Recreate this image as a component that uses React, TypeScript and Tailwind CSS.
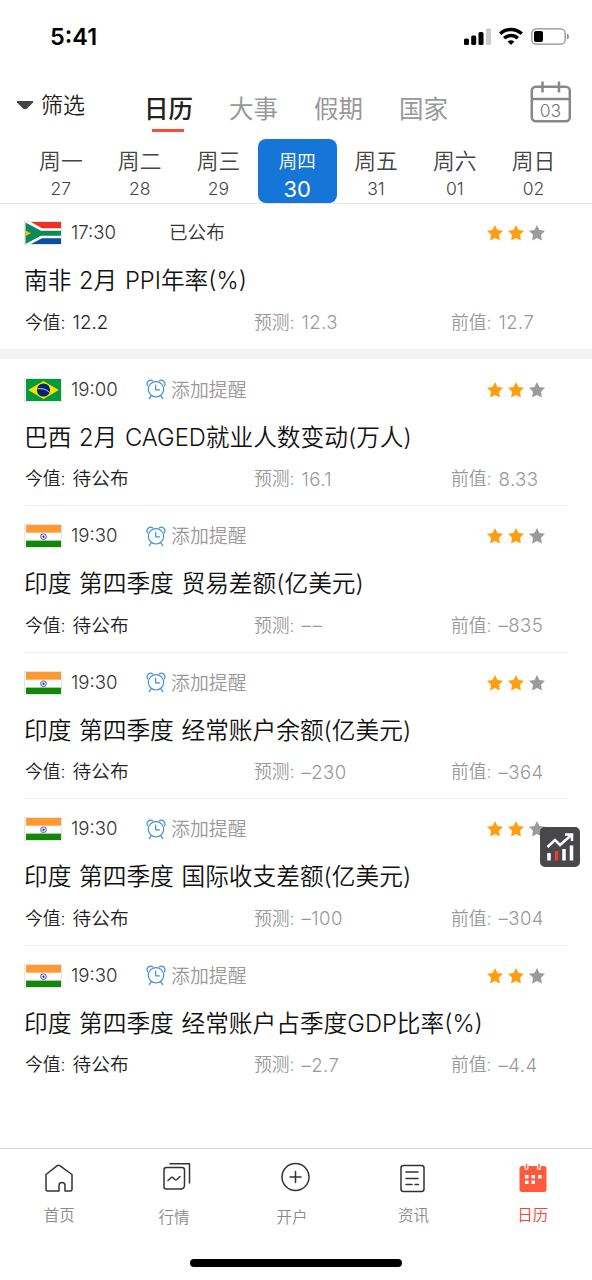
import React, { useState } from 'react'
import clsx from 'clsx'

type Country = 'za' | 'br' | 'in'

interface EconEvent {
  id: number;
  country: Country;
  time: string;
  title: string;
  published: boolean;
  actual: string;
  forecast: string;
  previous: string;
}

const days = [
  { label: '周一', date: '27' },
  { label: '周二', date: '28' },
  { label: '周三', date: '29' },
  { label: '周四', date: '30' },
  { label: '周五', date: '31' },
  { label: '周六', date: '01' },
  { label: '周日', date: '02' },
]

const events: EconEvent[] = [
  { id: 1, country: 'za', time: '17:30', title: '南非 2月 PPI年率(%)', published: true, actual: '12.2', forecast: '12.3', previous: '12.7' },
  { id: 2, country: 'br', time: '19:00', title: '巴西 2月 CAGED就业人数变动(万人)', published: false, actual: '待公布', forecast: '16.1', previous: '8.33' },
  { id: 3, country: 'in', time: '19:30', title: '印度 第四季度 贸易差额(亿美元)', published: false, actual: '待公布', forecast: '––', previous: '–835' },
  { id: 4, country: 'in', time: '19:30', title: '印度 第四季度 经常账户余额(亿美元)', published: false, actual: '待公布', forecast: '–230', previous: '–364' },
  { id: 5, country: 'in', time: '19:30', title: '印度 第四季度 国际收支差额(亿美元)', published: false, actual: '待公布', forecast: '–100', previous: '–304' },
  { id: 6, country: 'in', time: '19:30', title: '印度 第四季度 经常账户占季度GDP比率(%)', published: false, actual: '待公布', forecast: '–2.7', previous: '–4.4' },
]

const StatusBar = () => (
  <div className="flex h-[73px] items-center justify-between pl-[50px] pr-[22px]">
    <span className="text-[23.5px] font-semibold text-black">5:41</span>
    <svg width="106" height="20" viewBox="0 0 106 20">
      <rect x="0" y="11.5" width="5" height="6.5" rx="1.5" />
      <rect x="7.2" y="8.5" width="5" height="9.5" rx="1.5" />
      <rect x="14.5" y="5" width="5" height="13" rx="1.5" />
      <rect x="22" y="1.3" width="5" height="16.7" rx="1.5" fill="#ccc" />
      <g fill="none" stroke="#000" strokeWidth="3.4">
        <path d="M36.2 6.8a15.6 15.6 0 0 1 21.6 0" />
        <path d="M40.2 11.2a9.8 9.8 0 0 1 13.6 0" />
      </g>
      <path d="M47 18l-3.4-3.400a5.300 5.300 0 0 1 6.800 0z" />
      <rect x="67.8" y="1.8" width="33.4" height="15.4" rx="4.5" fill="none" stroke="#8e8e8e" strokeWidth="1.3" />
      <rect x="70" y="4" width="9" height="11" rx="2" />
      <path d="M103 6.5c2.6.8 2.6 5.2 0 6z" fill="#8e8e8e" />
    </svg>
  </div>
)

const Flag = ({ country }: { country: Country }) => (
  <svg width="38" height="24" viewBox="0 0 38 24">
    <rect width="38" height="24" fill="#e6e6e6" />
    <rect x="1" y="1" width="36" height="22" fill="#fff" />
    {country === 'za' && (
      <g>
        <path d="M7 1h30v6.300H18z" fill="#ee3124" />
        <path d="M7 23h30v-5.800H18z" fill="#0b4ea2" />
        <path d="M1.500 1.500L17 9.700h20v5H17L1.500 23z" fill="#0b8a5c" />
        <path d="M1.500 9.500l5.500 2.800-5.500 2.700z" fill="#fdb913" />
      </g>
    )}
    {country === 'br' && (
      <g>
        <rect x="2" y="1" width="35" height="22" fill="#009b3a" />
        <path d="M19.500 3l15.300 9-15.300 9-15.300-9z" fill="#fedf00" />
        <circle cx="19.500" cy="12" r="6.600" fill="#002776" />
        <path d="M13.400 11c4-1 9 .2 12 3.400" fill="none" stroke="#fff" strokeWidth="0.8" />
      </g>
    )}
    {country === 'in' && (
      <g>
        <rect x="2" y="1" width="35" height="7.700" fill="#ff9933" />
        <rect x="2" y="16.600" width="35" height="6.400" fill="#138808" />
        <circle cx="19.500" cy="12.700" r="2.900" fill="#d9d9f0" stroke="#5a5ab4" strokeWidth="0.9" />
        <circle cx="19.500" cy="12.700" r="1" fill="#2b2b96" />
      </g>
    )}
  </svg>
)

const AlarmIcon = () => (
  <svg className="-mt-[2px]" width="20" height="21" viewBox="0 0 20 21" fill="none" stroke="#3f8fdc" strokeWidth="1.2" strokeLinecap="round" strokeLinejoin="round">
    <circle cx="10" cy="10.3" r="7.7" />
    <path d="M9.7 6.2v4.6h3.8" />
    <path d="M1.5 6.8C-.2 3.6 3.4-.4 6.6 1.7M18.5 6.8c1.7-3.2-1.9-7.2-5.1-5.1" />
    <path d="M5 17.2l-1.8 2.4M15 17.2l1.8 2.4" />
  </svg>
)

const Stars = () => (
  <div className="flex gap-[5px]">
    {['#ff9f0f', '#ff9f0f', '#9b9b9b'].map((color, i) => (
      <svg key={i} width="16" height="16" viewBox="0 0 16 16" fill={color}>
        <path d="M8 0l2.500 5 5.500.8-4 3.900.9 5.800L8 13l-4.900 2.500.9-5.800L0 5.800 5.500 5z" />
      </svg>
    ))}
  </div>
)

const EventItem = ({ event, first, divider }: { event: EconEvent; first: boolean; divider: boolean }) => (
  <div className="px-6">
    <div className={clsx('h-[146.5px]', first ? 'pt-[13px]' : 'pt-[14px]', divider && 'border-b border-[#f1f1f1]')}>
      <div className="flex h-8 items-center">
        <Flag country={event.country} />
        <span className="ml-[9px] w-[75px] text-[18.6px] text-[#333]">{event.time}</span>
        {event.published ? (
          <span className="ml-[23px] text-[18.6px] text-[#333]">已公布</span>
        ) : (
          <button className="flex items-center gap-[5px] pt-[2px] text-[18.9px] leading-6 text-[#999]">
            <AlarmIcon />
            添加提醒
          </button>
        )}
        <div className="ml-auto mr-[23px]">
          <Stars />
        </div>
      </div>
      <h3 className="mt-[12px] flex h-10 items-center whitespace-pre text-[23.7px] text-[#111] [word-spacing:1px]">{event.title}</h3>
      <div className="mt-[10px] flex h-6 items-center text-[17.8px] text-[#999]">
        <p className="flex w-[230px] items-center gap-[7px] pl-[1px] text-[#222]"><span>今值:</span><span className="text-[18.7px]">{event.actual}</span></p>
        <p className="flex w-[197px] items-center gap-[7px]">
          <span>预测:</span>
          <span className={clsx('text-[18.6px]', event.forecast === '––' ? 'tracking-[1.5px]' : 'tracking-[0.4px]')}>{event.forecast}</span>
        </p>
        <p className="flex items-center gap-[7px]"><span>前值:</span><span className="text-[18.6px] tracking-[0.4px]">{event.previous}</span></p>
      </div>
    </div>
  </div>
)

const navItems = [
  {
    label: '首页',
    labelClass: 'mt-[12px]',
    icon: <path d="M2 11.5L13.2 2.7q1.3-1 2.6 0L28 11.5v15q0 1.5-1.5 1.5h-5.500v-5.500a3 3 0 0 0-6 0v5.500H3.500q-1.500 0-1.500-1.500z" />,
  },
  {
    label: '行情',
    labelClass: 'mt-[14px] -ml-[7px]',
    icon: <g><path d="M3.5 4.5h15.5q2.5 0 2.500 2.500v15q0 4-4 4H3q-2 0-2-2V7q0-2.500 2.500-2.500zM7 .8h19.500V20" /><path d="M5 17.500l3.300-3q1-.5 2 .5l1.500 1.500q1 .8 2 0l3.200-3" /></g>,
  },
  {
    label: '开户',
    labelClass: 'mt-[14px] -ml-[8px]',
    icon: <g><circle cx="14.5" cy="14" r="13.5" /><path d="M9 14h11M14.5 8.5v11" /></g>,
  },
  {
    label: '资讯',
    labelClass: 'mt-[12px] -ml-[2px]',
    icon: <g><rect x="2" y="2.5" width="23" height="26" rx="2.5" /><path d="M7 9h12M7 15.500h12M7 21.500h6M16 21.500h3.500" /></g>,
  },
  {
    label: '日历',
    labelClass: 'mt-[12px]',
    icon: (
      <g stroke="none">
        <rect x="1.500" y="3" width="27" height="26" rx="2.500" fill="#ff5a3c" />
        <path d="M8.500 1v4M21 1v4" stroke="#fff" strokeWidth="4" />
        <path d="M8.500 1.500v4M21 1.500v4" stroke="#ff5a3c" strokeWidth="1.500" />
        <path d="M7 12h3.500v3.500H7zM13.500 12h3.500v3.500h-3.500zM20 12h3.500v3.500H20zM7 17.500h3.500v3.500H7zM13.500 17.500h3.500v3.500h-3.500z" fill="#fff" />
      </g>
    ),
  },
]

const App: React.FC = () => {
  const [tab, setTab] = useState('日历')
  const [selectedDate, setSelectedDate] = useState('30')

  return (
    <div className="relative flex h-[1280px] w-[592px] flex-col overflow-hidden bg-white font-['Inter','Noto_Sans_CJK_SC',sans-serif] font-[350]">
      <StatusBar />

      <header className="flex h-[66px] items-start">
        <button className="mt-[16px] flex w-[144px] items-center gap-[8px] pl-[17px] text-[22px] leading-[32px] text-[#222]">
          <svg width="16" height="9" viewBox="0 0 16 9"><path d="M0 0h16v1.5L9.5 8h-3L0 1.5z" fill="#444" /></svg>
          筛选
        </button>
        <nav className="mt-[18px] flex gap-[36px] text-[24.5px] leading-[36px]">
          {['日历', '大事', '假期', '国家'].map(name => (
            <button
              key={name}
              className={clsx('flex flex-col items-center', tab === name ? 'font-medium text-[#222]' : 'font-normal text-[#999]')}
              onClick={() => setTab(name)}
            >
              {name}
              {tab === name && <span className="mr-[2px] mt-[2px] h-[3px] w-8 bg-[#ff4a36]" />}
            </button>
          ))}
        </nav>
        <svg className="ml-auto mr-[20px] mt-[8px]" width="42" height="42" viewBox="0 0 42 42" fill="none" stroke="#888" strokeWidth="2.5">
          <rect x="1.8" y="5.8" width="38" height="34.5" rx="4" />
          <path d="M2 18h38M12.5 0.5v11M29 0.5v11" />
          <text x="20.5" y="36" textAnchor="middle" fontSize="17.5" fill="#777" stroke="none">03</text>
        </svg>
      </header>

      <div className="flex h-[65px] border-b border-[#e6e6e6] pl-[21.5px] pr-[19px]">
        {days.map(day => {
          const active = day.date === selectedDate
          return (
            <button
              key={day.date}
              className={clsx('flex flex-1 flex-col items-center rounded-lg pt-[7px]', active ? 'bg-[#1576d8] text-white' : 'text-[#444]')}
              onClick={() => setSelectedDate(day.date)}
            >
              <span className={clsx('leading-[30px]', active ? 'text-[18.5px]' : 'text-[21.8px]')}>{day.label}</span>
              <span className={clsx('leading-[26px]', active ? 'text-[22px] font-normal' : 'text-[17.5px]')}>{day.date}</span>
            </button>
          )
        })}
      </div>

      <main className="flex-1">
        {events.map((event, i) => (
          <React.Fragment key={event.id}>
            <EventItem event={event} first={i === 0} divider={i > 0 && i < events.length - 1} />
            {i === 0 && <div className="-mt-[1.5px] mb-[0.5px] h-[10px] bg-[#f3f3f3]" />}
          </React.Fragment>
        ))}
      </main>

      <footer className="h-[132px] border-t border-[#d4d4d4]">
        <div className="grid h-[110px] grid-cols-5 pt-[14px]">
          {navItems.map(item => (
            <div key={item.label} className={clsx('flex flex-col items-center text-[15.5px] leading-[22px]', item.label === tab ? 'text-[#f4452f]' : 'text-[#8c8c8c]')}>
              <svg width="30" height="30" viewBox="0 0 30 30" fill="none" stroke="#333" strokeWidth="1.5" strokeLinejoin="round" strokeLinecap="round" className="overflow-visible">
                {item.icon}
              </svg>
              <span className={item.labelClass}>{item.label}</span>
            </div>
          ))}
        </div>
        <div className="mx-auto h-2 w-[212px] rounded-full bg-black" />
      </footer>

      {/* floating chart shortcut */}
      <button className="absolute left-[540px] top-[827px] h-10 w-10 rounded-[5px] bg-[#3a3a3c]/93">
        <svg width="40" height="40" viewBox="0 0 40 40" fill="none" stroke="#fff" strokeWidth="2.5">
          <path d="M7.5 20L15 13l5 5L31.5 8M25 7.5h7V14" />
          <path d="M9 26v7.5M24 22v11.5M31.5 18.5v15" strokeWidth="3.5" />
          <path d="M16.5 24v9.5" stroke="#ee3a35" strokeWidth="3.5" />
        </svg>
      </button>
    </div>
  )
}

export default App
